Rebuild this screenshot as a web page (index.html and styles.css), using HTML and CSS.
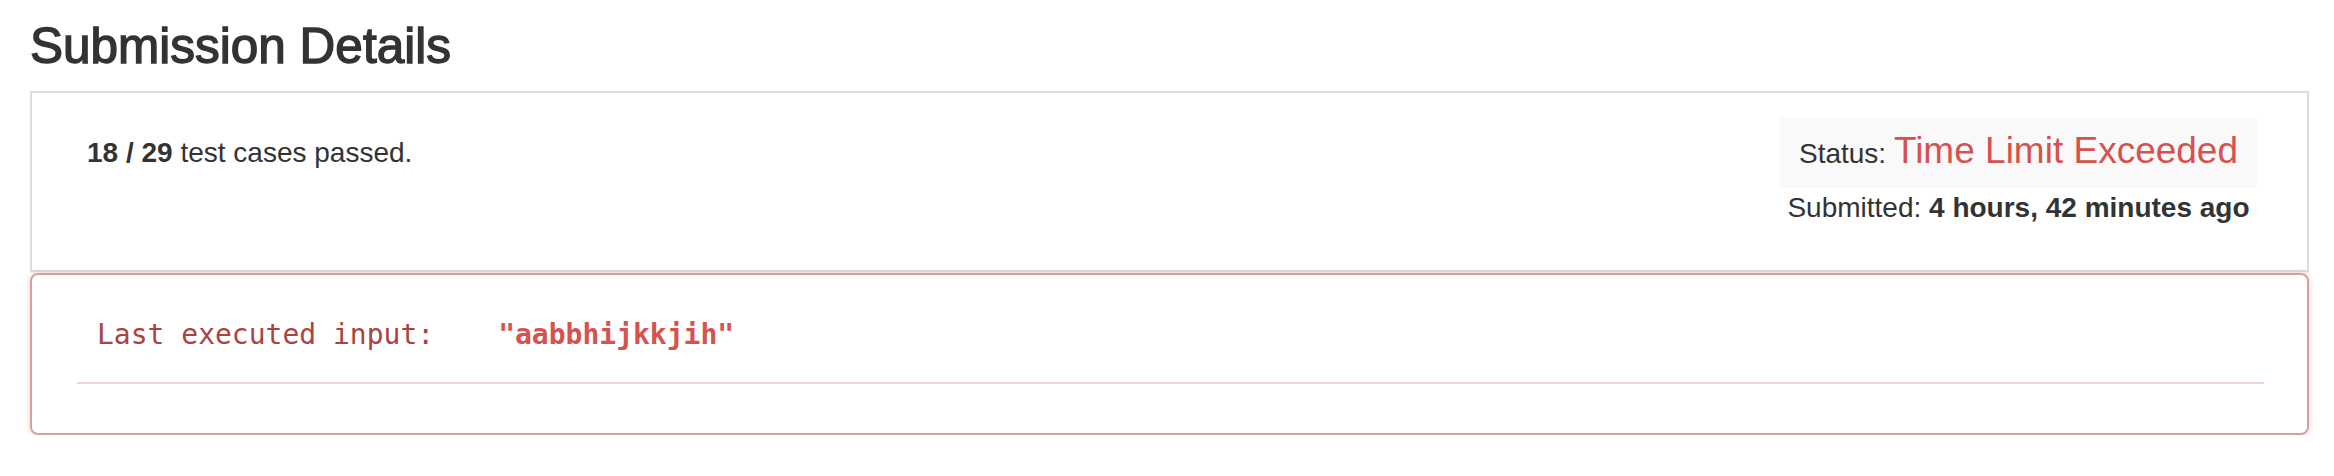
FILE: index.html
```html
<!DOCTYPE html>
<html lang="en">
<head>
<meta charset="utf-8">
<title>Submission Details</title>
<link rel="stylesheet" href="styles.css">
</head>
<body>
<div class="page">
  <h1 class="title">Submission Details</h1>
  <div class="summary-panel">
    <div class="summary-left">
      <span class="strong">18 / 29</span> test cases passed.
    </div>
    <div class="summary-right">
      <div class="status-box">Status: <span class="status-value">Time Limit Exceeded</span></div>
      <div class="submitted">Submitted: <span class="strong">4 hours, 42 minutes ago</span></div>
    </div>
  </div>
  <div class="error-panel">
    <div class="error-row"><span class="error-label">Last executed input:</span><span class="error-value">"aabbhijkkjih"</span></div>
    <div class="error-divider"></div>
  </div>
</div>
</body>
</html>
```

FILE: styles.css
```css
html, body {
  margin: 0;
  padding: 0;
  background: #ffffff;
}

.page {
  padding: 21px 25px 0 30px;
  font-family: "Liberation Sans", Arial, sans-serif;
  color: #333333;
}

.title {
  margin: 0 0 20px 0;
  font-size: 49.5px;
  line-height: 49.5px;
  font-weight: normal;
  -webkit-text-stroke: 1.4px #333333;
  color: #333333;
}

.summary-panel {
  display: flex;
  justify-content: space-between;
  align-items: flex-start;
  border: 2px solid #dddddd;
  padding: 25px 50px 42px 55px;
  box-shadow: 0 1px 2px rgba(0, 0, 0, 0.05);
  font-size: 28px;
  line-height: 40px;
}

.summary-left {
  margin-top: 15px;
}

.strong {
  font-weight: bold;
}

.summary-right {
  width: 477px;
  text-align: center;
}

.status-box {
  background: #f9f9f9;
  padding: 13px 8px 14px;
  line-height: 40px;
  white-space: nowrap;
}

.status-value {
  font-size: 37px;
  color: #d5524f;
}

.submitted {
  white-space: nowrap;
}

.error-panel {
  margin-top: 1px;
  border: 2px solid #d6a0a0;
  border-radius: 8px;
  box-shadow: 0 0 6px rgba(217, 83, 79, 0.28);
  padding: 40px 43px 49px 45px;
}

.error-row {
  padding-left: 20px;
  font-family: "DejaVu Sans Mono", "Liberation Mono", monospace;
  font-size: 28px;
  line-height: 40px;
  white-space: nowrap;
}

.error-label {
  color: #a94442;
}

.error-value {
  display: inline-block;
  margin-left: 64px;
  color: #d5524f;
  font-weight: bold;
}

.error-divider {
  margin-top: 27px;
  height: 2px;
  background: #f2d3d3;
}
```
